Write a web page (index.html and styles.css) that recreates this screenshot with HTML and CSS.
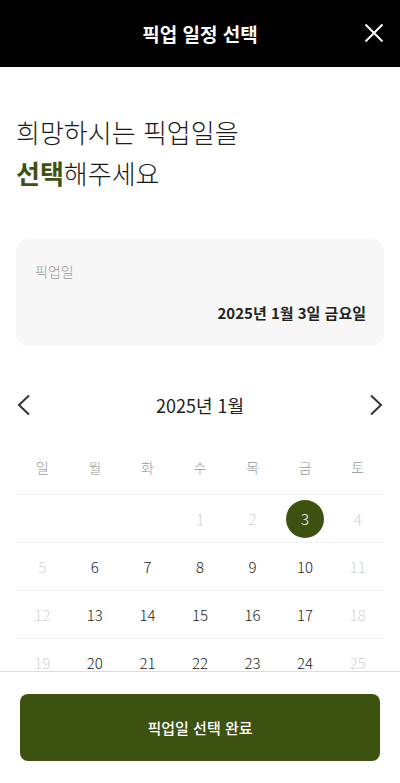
FILE: index.html
```html
<!DOCTYPE html>
<html lang="ko">
<head>
<meta charset="utf-8">
<meta name="viewport" content="width=device-width, initial-scale=1">
<title>픽업 일정 선택</title>
<link rel="stylesheet" href="styles.css">
</head>
<body>
<header class="topbar">
  <h1 class="topbar-title">픽업 일정 선택</h1>
  <button class="close-btn" aria-label="닫기">
    <svg width="20" height="20" viewBox="0 0 20 20"><path d="M1.5 1.5 L18.5 18.5 M18.5 1.5 L1.5 18.5" stroke="#fff" stroke-width="2" fill="none"/></svg>
  </button>
</header>
<main class="content">
  <h2 class="heading">희망하시는 픽업일을<br><strong class="accent">선택</strong>해주세요</h2>
  <section class="summary">
    <div class="summary-label">픽업일</div>
    <div class="summary-value">2025년 1월 3일 금요일</div>
  </section>
  <section class="calendar">
    <div class="cal-nav">
      <button class="nav-btn" aria-label="이전 달">
        <svg width="16" height="22" viewBox="0 0 16 22"><path d="M13 1.5 L3 11 L13 20.5" stroke="#333" stroke-width="2" fill="none"/></svg>
      </button>
      <div class="cal-title">2025년 1월</div>
      <button class="nav-btn" aria-label="다음 달">
        <svg width="16" height="22" viewBox="0 0 16 22"><path d="M3 1.5 L13 11 L3 20.5" stroke="#333" stroke-width="2" fill="none"/></svg>
      </button>
    </div>
    <div class="cal-weekdays">
      <span>일</span><span>월</span><span>화</span><span>수</span><span>목</span><span>금</span><span>토</span>
    </div>
    <div class="cal-row">
      <span></span><span></span><span></span><span class="off">1</span><span class="off">2</span><span class="sel"><b>3</b></span><span class="off">4</span>
    </div>
    <div class="cal-row">
      <span class="off">5</span><span>6</span><span>7</span><span>8</span><span>9</span><span>10</span><span class="off">11</span>
    </div>
    <div class="cal-row">
      <span class="off">12</span><span>13</span><span>14</span><span>15</span><span>16</span><span>17</span><span class="off">18</span>
    </div>
    <div class="cal-row">
      <span class="off">19</span><span>20</span><span>21</span><span>22</span><span>23</span><span>24</span><span class="off">25</span>
    </div>
    <div class="cal-row">
      <span class="off">26</span><span>27</span><span>28</span><span>29</span><span>30</span><span>31</span><span></span>
    </div>
  </section>
</main>
<footer class="bottom-bar">
  <button class="confirm-btn">픽업일 선택 완료</button>
</footer>
</body>
</html>
```

FILE: styles.css
```css
* { box-sizing: border-box; }
html, body { margin: 0; padding: 0; }
body {
  font-family: "Noto Sans CJK KR", "Noto Sans", sans-serif;
  color: #222;
  background: #fff;
  width: 400px;
  padding-bottom: 120px;
}
button {
  font-family: inherit;
  border: 0;
  background: none;
  padding: 0;
  cursor: pointer;
}
.topbar {
  height: 67px;
  background: #000;
  display: flex;
  align-items: center;
  justify-content: center;
  position: relative;
}
.topbar-title {
  margin: 0;
  color: #fff;
  font-size: 19px;
  font-weight: 700;
  line-height: 26px;
}
.close-btn {
  position: absolute;
  right: 16px;
  top: 23px;
  width: 20px;
  height: 20px;
  display: flex;
}
.content {
  padding: 0 16px;
}
.heading {
  margin: 44px 0 0;
  font-size: 26px;
  font-weight: 300;
  line-height: 41px;
  color: #1a1a1a;
}
.accent {
  color: #3d5210;
  font-weight: 700;
}
.summary {
  margin-top: 46px;
  background: #f7f7f7;
  border-radius: 12px;
  padding: 22px 18px 22px 19px;
  height: 107px;
}
.summary-label {
  font-size: 14px;
  line-height: 20px;
  color: #999;
  font-weight: 300;
}
.summary-value {
  margin-top: 21px;
  text-align: right;
  font-size: 15px;
  line-height: 22px;
  font-weight: 700;
  color: #222;
}
.cal-nav {
  margin-top: 44px;
  height: 30px;
  display: flex;
  align-items: center;
  justify-content: space-between;
}
.nav-btn {
  width: 16px;
  height: 22px;
  display: flex;
}
.cal-title {
  font-size: 18px;
  line-height: 26px;
  color: #222;
  font-weight: 400;
}
.cal-weekdays {
  margin-top: 20px;
  height: 54px;
  display: grid;
  grid-template-columns: repeat(7, 1fr);
  align-items: center;
  text-align: center;
  font-size: 14px;
  color: #999;
  font-weight: 300;
}
.cal-row {
  height: 48px;
  border-top: 1px solid #f1f1f1;
  display: grid;
  grid-template-columns: repeat(7, 1fr);
  align-items: center;
  justify-items: center;
  font-size: 15px;
  color: #222;
  font-weight: 300;
}
.cal-row .off { color: #d2d2d2; }
.cal-row .sel b {
  display: flex;
  width: 38px;
  height: 38px;
  border-radius: 50%;
  background: #3d5210;
  color: #fff;
  font-weight: 300;
  align-items: center;
  justify-content: center;
}
.bottom-bar {
  position: fixed;
  left: 0;
  right: 0;
  bottom: 0;
  height: 112px;
  background: #fff;
  border-top: 1px solid #ddd;
  padding: 22px 20px 0;
}
.confirm-btn {
  width: 100%;
  height: 67px;
  border-radius: 8px;
  background: #3d5210;
  color: #fff;
  font-size: 15px;
  font-weight: 500;
}
```
